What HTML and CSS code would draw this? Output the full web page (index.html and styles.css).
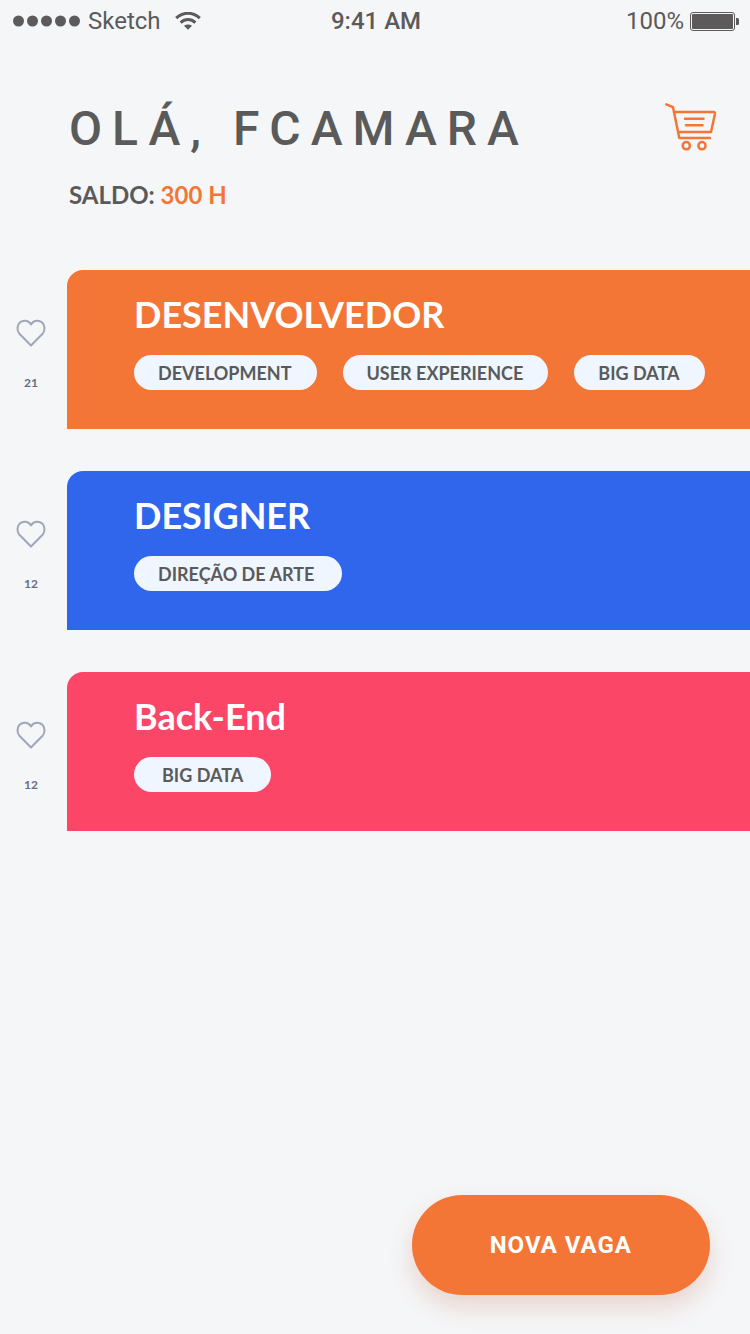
FILE: index.html
```html
<!DOCTYPE html>
<html lang="pt-BR">
<head>
<meta charset="utf-8">
<meta name="viewport" content="width=device-width, initial-scale=1">
<title>Vagas</title>
<link rel="stylesheet" href="styles.css">
</head>
<body>
<div class="screen">
  <div class="status">
    <div class="status-left">
      <svg class="dots" width="68" height="12" viewBox="0 0 68 12" aria-hidden="true"><circle cx="5.5" cy="6" r="5.5"/><circle cx="19.5" cy="6" r="5.5"/><circle cx="33.5" cy="6" r="5.5"/><circle cx="47.5" cy="6" r="5.5"/><circle cx="61.5" cy="6" r="5.5"/></svg>
      <span>Sketch</span>
      <svg class="wifi" width="26" height="18" viewBox="0 0 26 18" aria-hidden="true"><path class="wave" d="M1.2 6.2C8-.4 18-.4 24.800 6.200M5.600 10.600C10 6.600 16 6.600 20.400 10.600"/><path d="M9 13.800C11.400 11.900 14.600 11.900 17 13.800L13 17.800Z"/></svg>
    </div>
    <time class="clock">9:41 AM</time>
    <div class="status-right">
      <span>100%</span>
      <svg width="49" height="19" viewBox="0 0 49 19" aria-hidden="true"><rect class="shell" x=".5" y=".5" width="44" height="18" rx="2.500"/><rect x="2" y="2" width="41" height="15" rx="1"/><path d="M46 6h1.500q1.500 0 1.500 1.500v4q0 1.500-1.500 1.500H46z"/></svg>
    </div>
  </div>

  <header class="header">
    <div>
      <h1 class="greeting">OLÁ, FCAMARA</h1>
      <p class="balance">SALDO: <span class="amount">300 H</span></p>
    </div>
    <button class="cart" type="button" aria-label="Carrinho">
      <svg width="52" height="48" viewBox="0 0 52 48"><path d="M1.300 1.400L8 4.200L14.300 35H45M9.300 9H48.500Q50.300 9 50 10.800L46 29H13M20 15.700H38.500M21 22.300H37.500"/><circle cx="21.300" cy="42.700" r="3.600"/><circle cx="37" cy="42.700" r="3.600"/></svg>
    </button>
  </header>

  <main class="jobs">
    <article class="job">
      <div class="likes">
        <button class="like" type="button" aria-label="Curtir Desenvolvedor"><svg width="30" height="28" viewBox="0 0 30 28"><path d="M15 26.500L3.400 14.800C.6 11.600 1 6 3.800 3.600C7 .8 12.400 1 15 5.400C17.600 1 23 .8 26.200 3.600C29 6 29.400 11.600 26.600 14.800Z"/></svg></button>
        <span class="count">21</span>
      </div>
      <div class="card orange">
        <h2 class="job-title">DESENVOLVEDOR</h2>
        <ul class="tags"><li class="tag">DEVELOPMENT</li><li class="tag">USER EXPERIENCE</li><li class="tag">BIG DATA</li></ul>
      </div>
    </article>
    <article class="job">
      <div class="likes">
        <button class="like" type="button" aria-label="Curtir Designer"><svg width="30" height="28" viewBox="0 0 30 28"><path d="M15 26.500L3.400 14.800C.6 11.600 1 6 3.800 3.600C7 .8 12.400 1 15 5.400C17.600 1 23 .8 26.200 3.600C29 6 29.400 11.600 26.600 14.800Z"/></svg></button>
        <span class="count">12</span>
      </div>
      <div class="card blue">
        <h2 class="job-title">DESIGNER</h2>
        <ul class="tags"><li class="tag roomy">DIREÇÃO DE ARTE</li></ul>
      </div>
    </article>
    <article class="job">
      <div class="likes">
        <button class="like" type="button" aria-label="Curtir Back-End"><svg width="30" height="28" viewBox="0 0 30 28"><path d="M15 26.500L3.400 14.800C.6 11.600 1 6 3.800 3.600C7 .8 12.400 1 15 5.400C17.600 1 23 .8 26.200 3.600C29 6 29.400 11.600 26.600 14.800Z"/></svg></button>
        <span class="count">12</span>
      </div>
      <div class="card pink">
        <h2 class="job-title">Back-End</h2>
        <ul class="tags"><li class="tag wide">BIG DATA</li></ul>
      </div>
    </article>
  </main>

  <button class="new-job" type="button">NOVA VAGA</button>
</div>
</body>
</html>
```
FILE: styles.css
```css
* { box-sizing: border-box; }
body {
  margin: 0;
  background: #f5f6f8;
  color: #5a5a5a;
  font-family: Lato, sans-serif;
}
h1, h2, p, ul { margin: 0; padding: 0; }
button { border: 0; padding: 0; background: none; cursor: pointer; }
svg { display: block; }
.screen {
  min-height: 100vh;
  display: flex;
  flex-direction: column;
}
.status {
  display: grid;
  grid-template-columns: 1fr auto 1fr;
  align-items: center;
  height: 42px;
  padding: 0 11px 0 13px;
  font: 400 24px/28px Roboto, sans-serif;
}
.status svg { fill: #5c5a5b; }
.status-left, .status-right { display: flex; align-items: center; gap: 7px; }
.status-right { justify-content: flex-end; gap: 6px; }
.wifi { margin-left: 7px; }
.status .wave { fill: none; stroke: #5c5a5b; stroke-width: 3; }
.status .shell { fill: none; stroke: #5c5a5b; }
.clock { font-weight: 500; }
.header {
  display: flex;
  justify-content: space-between;
  align-items: flex-start;
  padding: 59px 33px 0 69px;
}
.greeting {
  font: 500 48px/56px Roboto, sans-serif;
  letter-spacing: 10px;
}
.balance {
  margin-top: 23px;
  font-size: 24px;
  line-height: 30px;
  font-weight: 700;
}
.amount { color: #f37637; }
.cart { margin-top: 2px; }
.cart svg {
  fill: none;
  stroke: #f37637;
  stroke-width: 2.5;
  stroke-linecap: round;
  stroke-linejoin: round;
}
.jobs {
  display: flex;
  flex-direction: column;
  gap: 42px;
  margin: 60px 0 40px;
}
.job { display: flex; }
.likes {
  flex: 0 0 67px;
  display: flex;
  flex-direction: column;
  align-items: center;
  padding: 49px 5px 0 0;
}
.like svg { fill: none; stroke: #a0a6b9; stroke-width: 2; stroke-linejoin: round; }
.count {
  margin-top: 28px;
  color: #656d85;
  font-size: 12px;
  line-height: 16px;
  font-weight: 700;
}
.card {
  flex: 1;
  min-width: 0;
  padding: 22px 40px 39px 67px;
  border-top-left-radius: 16px;
}
.orange { background: #f37637; }
.blue { background: #3066eb; }
.pink { background: #fc4667; }
.job-title {
  color: #fff;
  font-size: 36px;
  line-height: 44px;
  font-weight: 700;
}
.tags {
  display: flex;
  flex-wrap: wrap;
  gap: 12px 26px;
  margin-top: 19px;
  list-style: none;
}
.tag {
  padding: 1px 25px 0 24px;
  border-radius: 18px;
  background: #eff6ff;
  font-size: 18px;
  line-height: 34px;
  font-weight: 700;
}
.roomy { padding-right: 28px; }
.wide { padding-left: 28px; padding-right: 28px; }
.new-job {
  align-self: flex-end;
  margin: auto 40px 39px;
  padding: 0 78px;
  border-radius: 50px;
  background: #f37637;
  box-shadow: 0 12px 24px rgba(180, 80, 40, 0.2);
  color: #fff;
  font: 700 24px/100px Roboto, sans-serif;
  letter-spacing: 1px;
}
```
